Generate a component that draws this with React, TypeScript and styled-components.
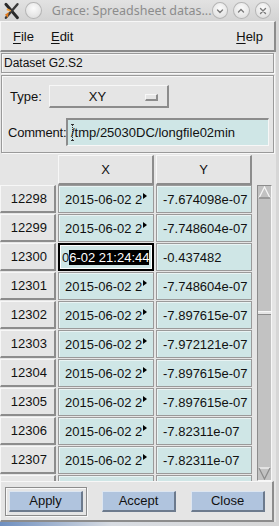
import React from 'react'
import styled, { createGlobalStyle } from 'styled-components'

const ROWS = [
  { id: 12298, x: '2015-06-02 2', y: '-7.674098e-07' },
  { id: 12299, x: '2015-06-02 2', y: '-7.748604e-07' },
  { id: 12300, x: '', y: '-0.437482', selected: true },
  { id: 12301, x: '2015-06-02 2', y: '-7.748604e-07' },
  { id: 12302, x: '2015-06-02 2', y: '-7.897615e-07' },
  { id: 12303, x: '2015-06-02 2', y: '-7.972121e-07' },
  { id: 12304, x: '2015-06-02 2', y: '-7.897615e-07' },
  { id: 12305, x: '2015-06-02 2', y: '-7.897615e-07' },
  { id: 12306, x: '2015-06-02 2', y: '-7.82311e-07' },
  { id: 12307, x: '2015-06-02 2', y: '-7.82311e-07' },
]

const GlobalStyle = createGlobalStyle`
  html, body {
    margin: 0;
    padding: 0;
    width: 279px;
    height: 526px;
    overflow: hidden;
    background: #e5e5e5;
    font-family: "Liberation Sans", Arial, sans-serif;
  }
`

const Window = styled.div`
  width: 279px;
  height: 526px;
  display: flex;
  flex-direction: column;
  background: #e5e5e5;
`

const TitleBar = styled.div`
  height: 23px;
  display: flex;
  align-items: center;
  padding: 0 8px 0 3px;
  background: linear-gradient(#e2e2e2, #d3d3d3);
  box-sizing: border-box;
`

const TitleText = styled.div`
  flex: 1;
  margin-left: 10px;
  font-family: "Noto Sans", sans-serif;
  font-size: 12.5px;
  color: #8c8c8c;
  white-space: nowrap;
`

const RoundButton = styled.div<{ gap?: number }>`
  width: 17px;
  height: 17px;
  border-radius: 50%;
  margin-left: ${(p) => p.gap ?? 0}px;
  border: 1px solid #b5b5b5;
  background: radial-gradient(circle at 50% 35%, #fbfbfb, #dadada);
  display: flex;
  align-items: center;
  justify-content: center;
  box-sizing: border-box;
`

const Body = styled.div`
  flex: 1;
  display: flex;
  flex-direction: column;
  border-right: 3px solid #d6d6d6;
`

const Raised = styled.div`
  border-top: 1px solid #f7f7f7;
  border-left: 1px solid #f7f7f7;
  border-bottom: 2px solid #8c8c8c;
  border-right: 2px solid #8c8c8c;
`

const MenuBar = styled(Raised)`
  height: 28px;
  display: flex;
  align-items: center;
  padding: 0 11px 0 12px;
  font-size: 13px;
  color: #111;
`

const MenuItem = styled.span<{ push?: boolean }>`
  margin-right: 17px;
  margin-left: ${(p) => (p.push ? 'auto' : '0')};
  ${(p) => (p.push ? 'margin-right: 0;' : '')}
  u {
    text-underline-offset: 2px;
  }
`

const Etched = styled.div`
  border: 1px solid #9a9a9a;
  box-shadow: inset 1px 1px 0 #f8f8f8, 1px 1px 0 #f8f8f8;
`

const DatasetLabel = styled(Etched)`
  margin: 1px 2px 0 1px;
  height: 18px;
  display: flex;
  align-items: center;
  padding-left: 2px;
  font-size: 12px;
  color: #111;
`

const FormFrame = styled(Etched)`
  margin: 2px 2px 0 1px;
  height: 78px;
  display: flex;
  flex-direction: column;
  padding: 9px 0 0 0;
  box-sizing: border-box;
`

const FieldRow = styled.div<{ spaced?: boolean }>`
  display: flex;
  align-items: center;
  font-size: 13px;
  color: #111;
  margin-top: ${(p) => (p.spaced ? '10px' : '0')};
`

const TypeLabel = styled.span`
  width: 47px;
  padding-left: 8px;
  box-sizing: border-box;
`

const OptionButton = styled(Raised)`
  width: 120px;
  height: 23px;
  display: flex;
  align-items: center;
  position: relative;
  background: #e5e5e5;
  justify-content: center;
  padding-right: 22px;
  box-sizing: border-box;
`

const OptionMark = styled.span`
  position: absolute;
  right: 9px;
  top: 8px;
  width: 10px;
  height: 4px;
  background: #e5e5e5;
  border-top: 1px solid #f7f7f7;
  border-left: 1px solid #f7f7f7;
  border-bottom: 2px solid #8c8c8c;
  border-right: 2px solid #8c8c8c;
`

const CommentLabel = styled.span`
  width: 64px;
  padding-left: 6px;
  box-sizing: border-box;
  white-space: nowrap;
  letter-spacing: -0.2px;
`

const TextField = styled.div`
  width: 203px;
  height: 28px;
  box-sizing: border-box;
  border-top: 2px solid #8c8c8c;
  border-left: 2px solid #8c8c8c;
  border-bottom: 1px solid #f7f7f7;
  border-right: 1px solid #f7f7f7;
  background: #cfe6e6;
  display: flex;
  align-items: center;
  padding-left: 3px;
  font-size: 13px;
  position: relative;
`

const Cursor = styled.span`
  position: absolute;
  left: 3px;
  top: 4px;
  width: 3px;
  height: 17px;
  border-top: 1px solid #333;
  border-bottom: 1px solid #333;
  box-sizing: border-box;
  &::after {
    content: '';
    position: absolute;
    left: 1px;
    top: 0;
    bottom: 0;
    border-left: 1px dotted #333;
  }
`

const TableArea = styled.div`
  margin-top: 2px;
  height: 326px;
  display: flex;
  overflow: hidden;
`

const Grid = styled.div`
  display: grid;
  grid-template-columns: 56px 98px 98px;
  grid-auto-rows: 29px;
  grid-template-rows: 30px;
  align-content: start;
`

const Corner = styled.div`
  background: #e5e5e5;
`

const ColHeader = styled(Raised)`
  display: flex;
  align-items: center;
  justify-content: center;
  font-size: 13px;
  color: #111;
  margin-left: 2px;
  box-sizing: border-box;
`

const RowHeader = styled(Raised)`
  display: flex;
  align-items: center;
  justify-content: flex-end;
  padding-right: 7px;
  font-size: 13px;
  color: #111;
  box-sizing: border-box;
  margin-bottom: 1px;
`

const Cell = styled.div<{ focused?: boolean }>`
  margin: 0 0 1px 2px;
  box-sizing: border-box;
  border: ${(p) => (p.focused ? '2px solid #000' : '1px solid #9a9a9a')};
  box-shadow: ${(p) =>
    p.focused ? 'inset 0 0 0 1px #fff' : 'inset 1px 1px 0 #e9f4f4'};
  background: #cfe6e6;
  display: flex;
  align-items: center;
  padding-left: ${(p) => (p.focused ? '2px' : '6px')};
  font-size: 13px;
  color: #111;
  white-space: nowrap;
  overflow: hidden;
  position: relative;
`

const Trunc = styled.span`
  position: absolute;
  right: 6px;
  top: 7px;
  width: 0;
  height: 0;
  border-top: 3px solid transparent;
  border-bottom: 3px solid transparent;
  border-left: 4px solid #000;
`

const Selection = styled.span`
  background: #000;
  color: #fff;
`

const ScrollCol = styled.div`
  margin-left: 5px;
  display: flex;
  flex-direction: column;
  padding-top: 30px;
`

const ScrollBar = styled.div`
  width: 15px;
  height: 296px;
  box-sizing: border-box;
  border-top: 1px solid #8c8c8c;
  border-left: 1px solid #8c8c8c;
  border-bottom: 1px solid #f7f7f7;
  border-right: 1px solid #f7f7f7;
  background: #c2c2c2;
  display: flex;
  flex-direction: column;
  align-items: center;
`

const Spacer = styled.div`
  flex: 1;
`

const Thumb = styled.div`
  margin-top: 112px;
  width: 13px;
  height: 4px;
  background: #e5e5e5;
  border-top: 1px solid #f7f7f7;
  border-bottom: 1px solid #8c8c8c;
  box-sizing: border-box;
`

const ButtonBar = styled(Raised)`
  margin: 0 2px 0 0;
  height: 38px;
  display: flex;
  align-items: center;
  padding: 0 7px 0 4px;
  justify-content: space-between;
`

const DefaultRing = styled.div`
  padding: 3px;
  border: 1px solid #8c8c8c;
  box-shadow: inset 1px 1px 0 #f8f8f8, 1px 1px 0 #f8f8f8;
`

const PushButton = styled.div`
  width: 74px;
  height: 21px;
  box-sizing: border-box;
  background: #b0c4de;
  border-top: 1px solid #dde6f1;
  border-left: 1px solid #dde6f1;
  border-bottom: 2px solid #6c7a8d;
  border-right: 2px solid #6c7a8d;
  display: flex;
  align-items: center;
  justify-content: center;
  font-size: 13px;
  color: #111;
`

const BottomStrip = styled.div`
  height: 4px;
  background: linear-gradient(90deg, #6e8fc0, #d8dce2 40%, #d6d6d6);
`

const Logo = () => (
  <svg width="18" height="18" viewBox="0 0 18 18">
    <path d="M3 2 L15 16" stroke="#2a2a2a" strokeWidth="3" strokeLinecap="round" />
    <path d="M15 2 L3 16" stroke="#3a3a3a" strokeWidth="2.5" strokeLinecap="round" />
    <path d="M2 13 L6 10 L5 16 Z" fill="#e07a1e" />
    <path d="M4 7 L8 9" stroke="#f0a040" strokeWidth="2" />
  </svg>
)

const Glyph = ({ d }: { d: string }) => (
  <svg width="8" height="8" viewBox="0 0 8 8">
    <path d={d} stroke="#7a7a7a" strokeWidth="1.4" fill="none" strokeLinecap="round" />
  </svg>
)

const Arrow = ({ up }: { up?: boolean }) => (
  <svg width="13" height="13" viewBox="0 0 13 13">
    {up ? (
      <>
        <path d="M6.5 1 L12 12 L1 12 Z" fill="#c2c2c2" />
        <path d="M1 12 L6.5 1 L12 12" stroke="#f7f7f7" strokeWidth="1.2" fill="none" />
        <path d="M1 12 L12 12" stroke="#8c8c8c" strokeWidth="1.5" />
      </>
    ) : (
      <>
        <path d="M1 1 L12 1 L6.5 12 Z" fill="#c2c2c2" />
        <path d="M1 1 L12 1" stroke="#f7f7f7" strokeWidth="1.2" />
        <path d="M1 1 L6.5 12 L12 1" stroke="#8c8c8c" strokeWidth="1.2" fill="none" />
      </>
    )}
  </svg>
)

export default function App() {
  return (
    <Window>
      <GlobalStyle />
      <TitleBar>
        <Logo />
        <RoundButton gap={5} />
        <TitleText>Grace: Spreadsheet datas...</TitleText>
        <RoundButton>
          <Glyph d="M1.5 3 L4 5.5 L6.5 3" />
        </RoundButton>
        <RoundButton gap={5}>
          <Glyph d="M1.5 5 L4 2.5 L6.5 5" />
        </RoundButton>
        <RoundButton gap={5}>
          <Glyph d="M1.5 1.5 L6.5 6.5 M6.5 1.5 L1.5 6.5" />
        </RoundButton>
      </TitleBar>
      <Body>
        <MenuBar>
          <MenuItem>
            <u>F</u>ile
          </MenuItem>
          <MenuItem>
            <u>E</u>dit
          </MenuItem>
          <MenuItem push>
            <u>H</u>elp
          </MenuItem>
        </MenuBar>
        <DatasetLabel>Dataset G2.S2</DatasetLabel>
        <FormFrame>
          <FieldRow>
            <TypeLabel>Type:</TypeLabel>
            <OptionButton>
              XY
              <OptionMark />
            </OptionButton>
          </FieldRow>
          <FieldRow spaced>
            <CommentLabel>Comment:</CommentLabel>
            <TextField>
              <Cursor />
              /tmp/25030DC/longfile02min
            </TextField>
          </FieldRow>
        </FormFrame>
        <TableArea>
          <Grid>
            <Corner />
            <ColHeader>X</ColHeader>
            <ColHeader>Y</ColHeader>
            {ROWS.map((r) => (
              <React.Fragment key={r.id}>
                <RowHeader>{r.id}</RowHeader>
                {r.selected ? (
                  <Cell focused>
                    0<Selection>6-02 21:24:44</Selection>
                  </Cell>
                ) : (
                  <Cell>
                    {r.x}
                    <Trunc />
                  </Cell>
                )}
                <Cell>{r.y}</Cell>
              </React.Fragment>
            ))}
            <RowHeader />
            <Cell />
            <Cell />
          </Grid>
          <ScrollCol>
            <ScrollBar>
              <Arrow up />
              <Thumb />
              <Spacer />
              <Arrow />
            </ScrollBar>
          </ScrollCol>
        </TableArea>
        <ButtonBar>
          <DefaultRing>
            <PushButton>Apply</PushButton>
          </DefaultRing>
          <PushButton>Accept</PushButton>
          <PushButton>Close</PushButton>
        </ButtonBar>
      </Body>
      <BottomStrip />
    </Window>
  )
}
